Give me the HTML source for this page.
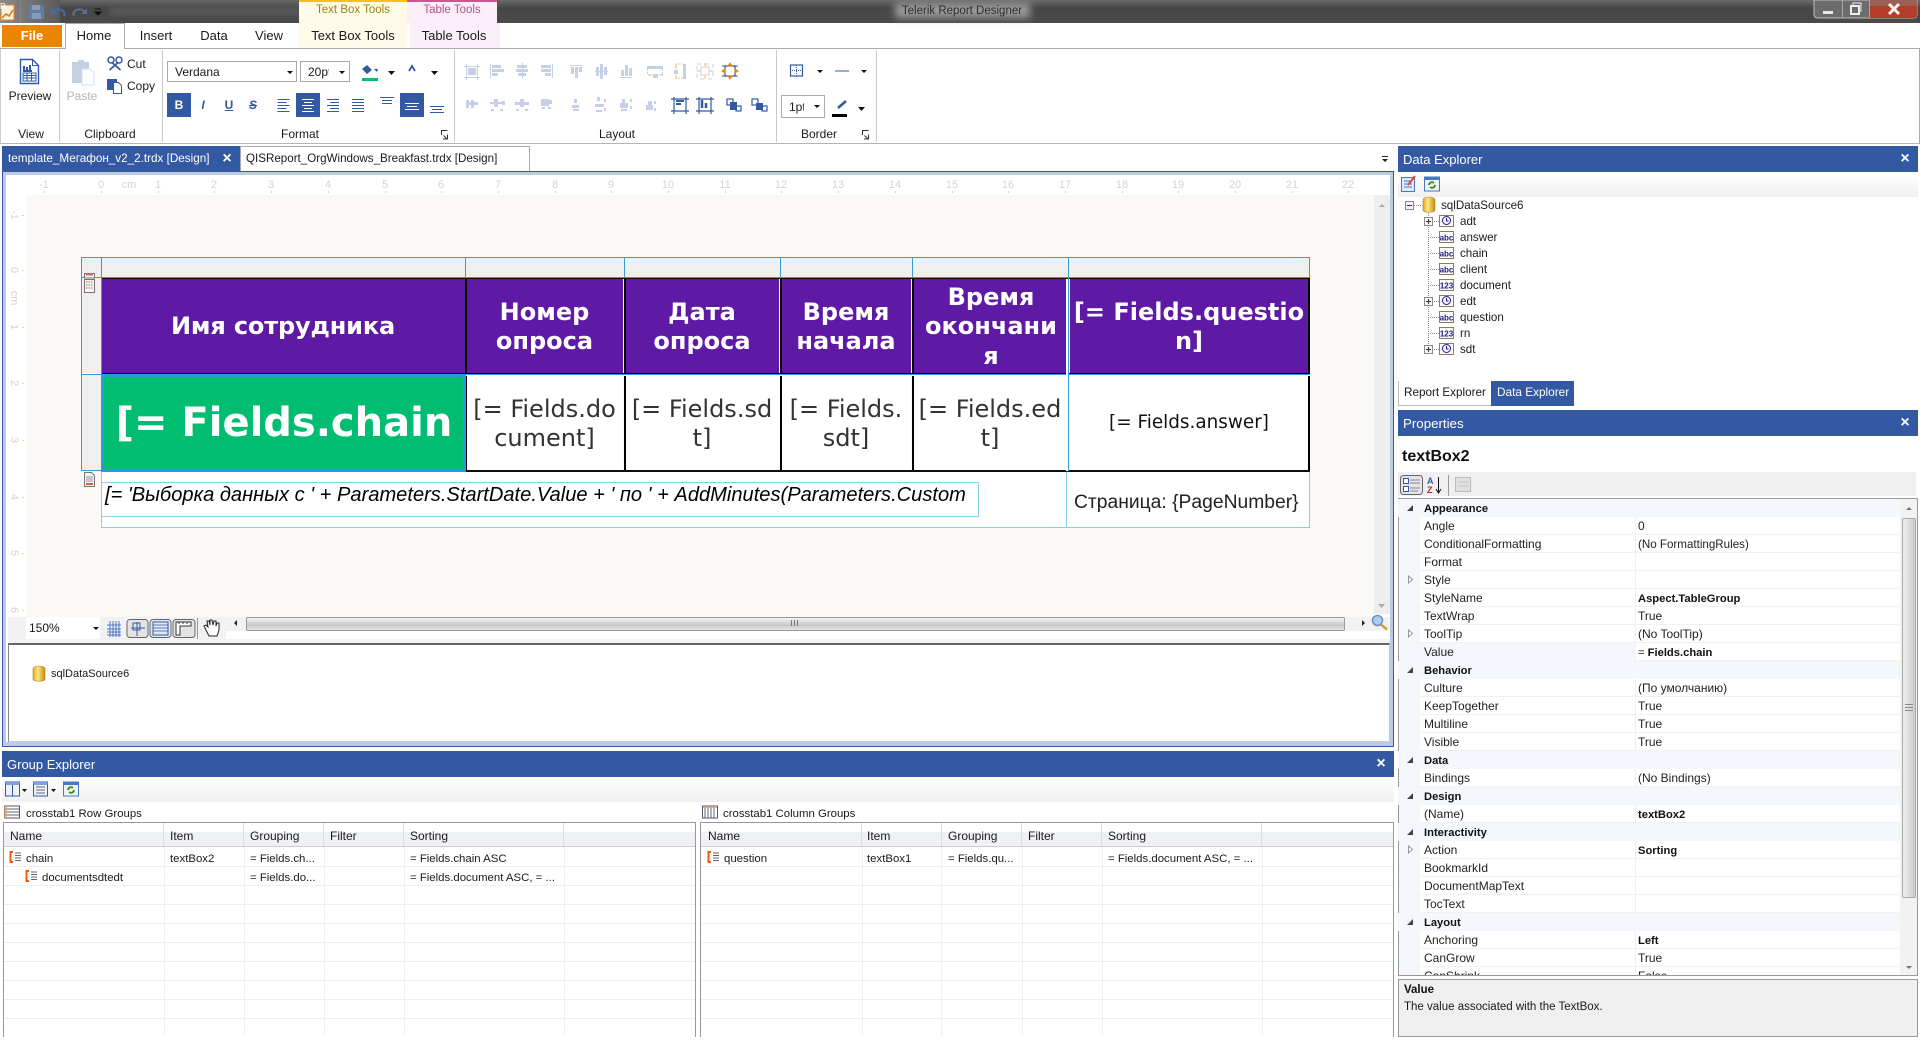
<!DOCTYPE html>
<html lang="ru"><head><meta charset="utf-8"><title>Telerik Report Designer</title>
<style>
html,body{margin:0;padding:0;background:#fff}
body{width:1920px;height:1040px;position:relative;overflow:hidden;font:12px/16px "Liberation Sans","Noto Sans CJK SC",sans-serif;color:#1a1a1a}
.a{position:absolute}
.t{position:absolute;white-space:nowrap;line-height:16px}
.c{transform:translateX(-50%)}
.hdr{position:absolute;background:#3359a3;color:#fff;font-size:13px;line-height:27px;height:26px}
.tb{position:absolute;height:25px;background:linear-gradient(#fff,#f0f0f0)}
.cell{position:absolute;display:flex;align-items:center;justify-content:center;text-align:center;font-family:"DejaVu Sans",sans-serif;box-sizing:border-box;overflow:hidden}
.h{top:279px;height:94px;padding-top:2px;background:#5e1aa5;color:#fff;font-weight:bold;font-size:24px;line-height:29.5px}
.d{top:376px;height:94px;padding-top:2px;background:#fff;color:#333;font-size:24px;line-height:29.5px}
.p{position:absolute;left:1424px;white-space:nowrap;line-height:18px;height:18px;font-size:12px;color:#222}
.v{position:absolute;left:1638px;white-space:nowrap;line-height:18px;height:18px;font-size:12px;color:#222}
.b{font-weight:bold;color:#111;font-size:11.2px;margin-top:1px}
.g{font-size:11.4px;margin-top:1px}
.tr{font-size:11.6px;margin-top:1px}
.cat{position:absolute;left:1398px;width:502px;height:18px;background:#f4f7fc}
</style></head><body>

<!-- title bar -->
<div class="a" style="left:0;top:0;width:1920px;height:23px;background:linear-gradient(#6a6a6a,#464646 35%,#4a4a4a)"></div>
<div class="a" style="left:0;top:0;width:60px;height:23px;background:linear-gradient(90deg,#8a8a8a,#5a5a5a)"></div>
<div class="a" style="left:110px;top:7px;width:190px;height:8px;background:#5c5c5c;filter:blur(3px)"></div>
<div class="a" style="left:895px;top:3px;width:135px;height:15px;background:#9a9a9a;filter:blur(4px)"></div>
<div class="t c" style="left:962px;top:3px;color:#2e2e2e;font-size:11.5px">Telerik Report Designer</div>

<!-- contextual tabs -->
<div class="a" style="left:299px;top:0;width:108px;height:48px;background:#fefbe9;border-top:2px solid #f2c316;box-sizing:border-box"></div>
<div class="a" style="left:407px;top:0;width:90px;height:23px;background:#faeff8;border-top:2px solid #c8588f;box-sizing:border-box"></div>
<div class="a" style="left:410px;top:23px;width:90px;height:25px;background:#faeff8"></div>
<div class="t c" style="left:353px;top:2px;color:#9c7f1e;font-size:11.5px">Text Box Tools</div>
<div class="t c" style="left:452px;top:2px;color:#b8508f;font-size:11.5px">Table Tools</div>

<!-- ribbon tabs -->
<div class="a" style="left:0;top:48px;width:1920px;height:1px;background:#aaa"></div>
<div class="a" style="left:2px;top:25px;width:60px;height:22px;background:#e98500;color:#fff;text-align:center;line-height:21px;font-size:13px;font-weight:bold">File</div>
<div class="a" style="left:65px;top:23px;width:60px;height:26px;background:#fff;border:1px solid #aaa;border-bottom:none;box-sizing:border-box"></div>
<div class="t c" style="left:94px;top:28px;font-size:13px">Home</div>
<div class="t c" style="left:156px;top:28px;font-size:13px">Insert</div>
<div class="t c" style="left:214px;top:28px;font-size:13px">Data</div>
<div class="t c" style="left:269px;top:28px;font-size:13px">View</div>
<div class="t c" style="left:353px;top:28px;font-size:13px">Text Box Tools</div>
<div class="t c" style="left:454px;top:28px;font-size:13px">Table Tools</div>

<!-- ribbon body -->
<div class="a" style="left:0;top:49px;width:1920px;height:95px;border-bottom:1px solid #b5b5b5;border-left:1px solid #ccc;border-right:1px solid #aaa;box-sizing:border-box;background:#fff"></div>
<div class="a" style="left:59px;top:50px;width:1px;height:92px;background:#c8c8c8"></div>
<div class="a" style="left:162px;top:50px;width:1px;height:92px;background:#c8c8c8"></div>
<div class="a" style="left:454px;top:50px;width:1px;height:92px;background:#c8c8c8"></div>
<div class="a" style="left:776px;top:50px;width:1px;height:92px;background:#c8c8c8"></div>
<div class="a" style="left:876px;top:50px;width:1px;height:92px;background:#c8c8c8"></div>
<div class="t c" style="left:31px;top:126px">View</div>
<div class="t c" style="left:110px;top:126px">Clipboard</div>
<div class="t c" style="left:300px;top:126px">Format</div>
<div class="t c" style="left:617px;top:126px">Layout</div>
<div class="t c" style="left:819px;top:126px">Border</div>
<div class="t c" style="left:30px;top:88px">Preview</div>
<div class="t c" style="left:82px;top:88px;color:#b4b4b4">Paste</div>
<div class="t" style="left:127px;top:56px">Cut</div>
<div class="t" style="left:127px;top:78px">Copy</div>
<div class="a" style="left:167px;top:61px;width:130px;height:21px;border:1px solid #aaa;box-sizing:border-box"></div>
<div class="t" style="left:175px;top:64px">Verdana</div>
<div class="a" style="left:300px;top:61px;width:50px;height:21px;border:1px solid #aaa;box-sizing:border-box"></div>
<div class="t" style="left:308px;top:64px;width:21px;overflow:hidden">20pt</div>
<div class="a" style="left:167px;top:93px;width:24px;height:24px;background:#3359a3"></div>
<div class="a" style="left:296px;top:93px;width:24px;height:24px;background:#3359a3"></div>
<div class="a" style="left:400px;top:93px;width:24px;height:24px;background:#3359a3"></div>
<div class="a" style="left:781px;top:95px;width:44px;height:23px;border:1px solid #aaa;box-sizing:border-box"></div>
<div class="t" style="left:789px;top:99px;width:15px;overflow:hidden">1pt</div>
<div class="t c" style="left:179px;top:97px;color:#fff;font-weight:bold">B</div>
<div class="t c" style="left:203px;top:97px;color:#3359a3;font-style:italic;font-weight:bold">I</div>
<div class="t c" style="left:229px;top:97px;color:#3359a3;font-weight:bold;text-decoration:underline">U</div>
<div class="t c" style="left:253px;top:97px;color:#3359a3;font-weight:bold;text-decoration:line-through;font-style:italic">S</div>

<!-- document tabs -->
<div class="a" style="left:2px;top:146px;width:238px;height:25px;background:#3359a3"></div>
<div class="t" style="left:8px;top:151px;color:#fff;font-size:11.7px">template_Мегафон_v2_2.trdx [Design]</div>
<div class="t c" style="left:227px;top:151px;color:#fff;font-size:16px;font-weight:bold">×</div>
<div class="a" style="left:240px;top:146px;width:290px;height:25px;border:1px solid #aaa;border-bottom:none;box-sizing:border-box;background:#fff"></div>
<div class="t" style="left:246px;top:151px;font-size:11.6px">QISReport_OrgWindows_Breakfast.trdx [Design]</div>

<!-- designer frame -->
<div class="a" style="left:2px;top:171px;width:1392px;height:576px;border:1px solid #3359a3;background:#bccbe3;box-sizing:border-box"></div>
<div class="a" style="left:6px;top:175px;width:1384px;height:567px;background:#fff"></div>
<div class="a" style="left:26px;top:195px;width:1348px;height:422px;background:#faf9f5"></div>
<div class="a" style="left:1374px;top:195px;width:16px;height:419px;background:#eeeeee"></div>
<div class="a" style="left:8px;top:617px;width:1382px;height:26px;background:#f2f2f2"></div>
<div class="a" style="left:26px;top:617px;width:74px;height:22px;background:#fff"></div>
<div class="a" style="left:226px;top:631px;width:1164px;height:8px;background:#fff"></div>
<div class="a" style="left:226px;top:617px;width:1146px;height:14px;background:#f2f2f2"></div>
<div class="a" style="left:246px;top:617px;width:1099px;height:14px;box-sizing:border-box;border:1px solid #999;border-radius:2px;background:linear-gradient(#f4f4f4,#c8c8c8 60%,#e6e6e6)"></div>
<div class="t" style="left:29px;top:620px;font-size:12px">150%</div>
<div class="a" style="left:8px;top:643px;width:1382px;height:99px;background:#fff;border-top:2px solid #666;border-left:1px solid #888;border-right:1px solid #ccc;border-bottom:1px solid #ccc;box-sizing:border-box"></div>
<div class="t" style="left:51px;top:666px;font-size:11px">sqlDataSource6</div>

<!-- report table -->
<div class="a" style="left:81px;top:257px;width:1228px;height:21px;background:#efefef"></div>
<div class="a" style="left:81px;top:257px;width:20px;height:213px;background:#efefef"></div>
<div class="a" style="left:101px;top:470px;width:1208px;height:57px;background:#fff"></div>
<div class="cell h" style="left:101px;width:364px;letter-spacing:-.15px">Имя сотрудника</div>
<div class="cell h" style="left:466px;width:157px">Номер<br>опроса</div>
<div class="cell h" style="left:625px;width:154px">Дата<br>опроса</div>
<div class="cell h" style="left:781px;width:130px">Время<br>начала</div>
<div class="cell h" style="left:914px;width:154px">Время<br>окончани<br>я</div>
<div class="cell h" style="left:1070px;width:238px">[= Fields.questio<br>n]</div>
<div class="cell" style="left:103px;top:376px;width:360px;height:94px;background:#00bd71;color:#fff;font-weight:bold;font-size:40px;padding-left:2px">[= Fields.chain</div>
<div class="cell d" style="left:466px;width:157px">[= Fields.do<br>cument]</div>
<div class="cell d" style="left:625px;width:154px">[= Fields.sd<br>t]</div>
<div class="cell d" style="left:781px;width:130px">[= Fields.<br>sdt]</div>
<div class="cell d" style="left:913px;width:154px">[= Fields.ed<br>t]</div>
<div class="cell d" style="left:1070px;width:238px;font-size:18.4px;padding-top:0;color:#111">[= Fields.answer]</div>
<!-- lines -->
<div class="a" style="left:101px;top:278px;width:1208px;height:1px;background:#0c0c0c"></div>
<div class="a" style="left:465px;top:279px;width:2px;height:192px;background:#000"></div>
<div class="a" style="left:624px;top:279px;width:2px;height:192px;background:#000"></div>
<div class="a" style="left:780px;top:279px;width:2px;height:192px;background:#000"></div>
<div class="a" style="left:912px;top:279px;width:2px;height:192px;background:#000"></div>
<div class="a" style="left:1308px;top:278px;width:2px;height:193px;background:#000"></div>
<div class="a" style="left:465px;top:470px;width:845px;height:2px;background:#0c0c0c"></div>
<div class="a" style="left:81px;top:373px;width:1229px;height:3px;background:#fff"></div>
<div class="a" style="left:81px;top:374px;width:20px;height:2px;background:#efefef"></div>
<div class="a" style="left:101px;top:373px;width:1209px;height:1px;background:#000"></div>
<div class="a" style="left:81px;top:374px;width:1229px;height:1px;background:#3a9ad6"></div>
<div class="a" style="left:1068px;top:257px;width:1px;height:214px;background:#3a9ad6"></div>
<div class="a" style="left:1066px;top:279px;width:2px;height:192px;background:#fff"></div>
<div class="a" style="left:1068px;top:279px;width:1px;height:192px;background:#3a9ad6"></div>
<div class="a" style="left:81px;top:257px;width:1229px;height:1px;background:#3a9ad6"></div>
<div class="a" style="left:81px;top:277px;width:1229px;height:1px;background:#3a9ad6"></div>
<div class="a" style="left:81px;top:257px;width:1px;height:214px;background:#3a9ad6"></div>
<div class="a" style="left:101px;top:257px;width:1px;height:214px;background:#3a9ad6"></div>
<div class="a" style="left:465px;top:257px;width:1px;height:21px;background:#3a9ad6"></div>
<div class="a" style="left:624px;top:257px;width:1px;height:21px;background:#3a9ad6"></div>
<div class="a" style="left:780px;top:257px;width:1px;height:21px;background:#3a9ad6"></div>
<div class="a" style="left:912px;top:257px;width:1px;height:21px;background:#3a9ad6"></div>
<div class="a" style="left:1309px;top:257px;width:1px;height:21px;background:#3a9ad6"></div>
<div class="a" style="left:81px;top:470px;width:20px;height:1px;background:#3a9ad6"></div>
<div class="a" style="left:101px;top:374px;width:365px;height:98px;border:3px solid #2b9bd8;box-sizing:border-box"></div>
<!-- footer -->
<div class="a" style="left:101px;top:472px;width:1209px;height:56px;border:1px solid #86cdee;border-top:none;box-sizing:border-box"></div>
<div class="a" style="left:1066px;top:472px;width:1px;height:55px;background:#86cdee"></div>
<div class="a" style="left:101px;top:482px;width:878px;height:35px;border:1px solid #86cdee;box-sizing:border-box"></div>
<div class="t" style="left:105px;top:485px;font-size:20.1px;line-height:20px;font-style:italic;color:#000">[= 'Выборка данных с ' + Parameters.StartDate.Value + ' по ' + AddMinutes(Parameters.Custom</div>
<div class="t" style="left:1074px;top:492px;font-size:19.3px;line-height:22px;color:#222">Страница: {PageNumber}</div>

<!-- Data Explorer -->
<div class="hdr" style="left:1398px;top:146px;width:520px;padding-left:5px;box-sizing:border-box">Data Explorer</div>
<div class="t c" style="left:1905px;top:151px;color:#fff;font-weight:bold;font-size:16px">×</div>
<div class="tb" style="left:1398px;top:172px;width:520px"></div>
<div class="t tr" style="left:1441px;top:197px">sqlDataSource6</div>
<div class="t tr" style="left:1460px;top:213px">adt</div>
<div class="t tr" style="left:1460px;top:229px">answer</div>
<div class="t tr" style="left:1460px;top:245px">chain</div>
<div class="t tr" style="left:1460px;top:261px">client</div>
<div class="t tr" style="left:1460px;top:277px">document</div>
<div class="t tr" style="left:1460px;top:293px">edt</div>
<div class="t tr" style="left:1460px;top:309px">question</div>
<div class="t tr" style="left:1460px;top:325px">rn</div>
<div class="t tr" style="left:1460px;top:341px">sdt</div>
<div class="a" style="left:1398px;top:381px;width:94px;height:25px;border:1px solid #bbb;border-top:none;border-right:none;box-sizing:border-box;background:#fff"></div>
<div class="t" style="left:1404px;top:385px;font-size:11.7px">Report Explorer</div>
<div class="a" style="left:1491px;top:381px;width:83px;height:25px;background:#3359a3"></div>
<div class="t" style="left:1497px;top:384px;color:#fff;font-size:11.8px">Data Explorer</div>

<!-- Properties -->
<div class="hdr" style="left:1398px;top:410px;width:520px;padding-left:5px;box-sizing:border-box;font-size:13.3px">Properties</div>
<div class="t c" style="left:1905px;top:415px;color:#fff;font-weight:bold;font-size:16px">×</div>
<div class="t" style="left:1402px;top:448px;font-size:16px;line-height:18px;font-weight:bold;color:#111">textBox2</div>
<div class="a" style="left:1398px;top:472px;width:518px;height:24px;background:#efefef"></div>
<div class="a" style="left:1398px;top:498px;width:520px;height:478px;border:1px solid #999;box-sizing:border-box;background:#fff;overflow:hidden"></div>
<div class="a" style="left:1399px;top:499px;width:21px;height:476px;background:#f4f7fc"></div>
<div class="a" style="left:1635px;top:499px;width:1px;height:476px;background:#f0f0f0"></div>
<div class="a" style="left:1420px;top:499px;width:480px;height:476px;background:repeating-linear-gradient(transparent 0,transparent 17px,#f1f1f1 17px,#f1f1f1 18px)"></div>
<div class="cat" style="top:499px"></div><div class="cat" style="top:661px"></div><div class="cat" style="top:751px"></div><div class="cat" style="top:787px"></div><div class="cat" style="top:823px"></div><div class="cat" style="top:913px"></div>
<div class="a" style="left:1420px;top:643px;width:215px;height:18px;background:#f4f7fc"></div>
<div class="p b" style="top:499px">Appearance</div>
<div class="p" style="top:517px">Angle</div><div class="v" style="top:517px">0</div>
<div class="p" style="top:535px">ConditionalFormatting</div><div class="v" style="top:536px;font-size:11.6px">(No FormattingRules)</div>
<div class="p" style="top:553px">Format</div>
<div class="p" style="top:571px">Style</div>
<div class="p" style="top:589px">StyleName</div><div class="v b" style="top:589px">Aspect.TableGroup</div>
<div class="p" style="top:607px">TextWrap</div><div class="v" style="top:607px">True</div>
<div class="p" style="top:625px">ToolTip</div><div class="v" style="top:625px">(No ToolTip)</div>
<div class="p" style="top:643px">Value</div><div class="v b" style="top:643px"><span style="font-weight:normal">=</span> Fields.chain</div>
<div class="p b" style="top:661px">Behavior</div>
<div class="p" style="top:679px">Culture</div><div class="v" style="top:679px">(По умолчанию)</div>
<div class="p" style="top:697px">KeepTogether</div><div class="v" style="top:697px">True</div>
<div class="p" style="top:715px">Multiline</div><div class="v" style="top:715px">True</div>
<div class="p" style="top:733px">Visible</div><div class="v" style="top:733px">True</div>
<div class="p b" style="top:751px">Data</div>
<div class="p" style="top:769px">Bindings</div><div class="v" style="top:769px">(No Bindings)</div>
<div class="p b" style="top:787px">Design</div>
<div class="p" style="top:805px">(Name)</div><div class="v b" style="top:805px">textBox2</div>
<div class="p b" style="top:823px">Interactivity</div>
<div class="p" style="top:841px">Action</div><div class="v b" style="top:841px">Sorting</div>
<div class="p" style="top:859px">BookmarkId</div>
<div class="p" style="top:877px">DocumentMapText</div>
<div class="p" style="top:895px">TocText</div>
<div class="p b" style="top:913px">Layout</div>
<div class="p" style="top:931px">Anchoring</div><div class="v b" style="top:931px">Left</div>
<div class="p" style="top:949px">CanGrow</div><div class="v" style="top:949px">True</div>
<div class="p" style="top:967px;height:8px;overflow:hidden">CanShrink</div><div class="v" style="top:967px;height:8px;overflow:hidden">False</div>
<div class="a" style="left:1900px;top:499px;width:17px;height:476px;background:#f2f2f2"></div>
<div class="a" style="left:1902px;top:518px;width:14px;height:380px;background:linear-gradient(90deg,#eee,#ccc);border:1px solid #aaa;box-sizing:border-box;border-radius:2px"></div>
<div class="a" style="left:1398px;top:979px;width:520px;height:58px;background:#efefef;border:1px solid #999;box-sizing:border-box"></div>
<div class="t" style="left:1404px;top:982px;font-size:11.5px;font-weight:bold;color:#111">Value</div>
<div class="t" style="left:1404px;top:999px;font-size:11.5px">The value associated with the TextBox.</div>

<!-- Group Explorer -->
<div class="hdr" style="left:2px;top:751px;width:1392px;padding-left:5px;box-sizing:border-box">Group Explorer</div>
<div class="t c" style="left:1381px;top:756px;color:#fff;font-weight:bold;font-size:16px">×</div>
<div class="tb" style="left:2px;top:777px;width:1392px"></div>
<div class="t g" style="left:26px;top:805px">crosstab1 Row Groups</div>
<div class="t g" style="left:723px;top:805px">crosstab1 Column Groups</div>
<div class="a" style="left:3px;top:822px;width:693px;height:215px;border:1px solid #999;border-bottom:none;box-sizing:border-box"></div>
<div class="a" style="left:700px;top:822px;width:694px;height:215px;border:1px solid #999;border-bottom:none;box-sizing:border-box"></div>
<div class="a" style="left:4px;top:823px;width:691px;height:24px;background:linear-gradient(#fff 40%,#eff1f5 40%);border-bottom:1px solid #ccc;box-sizing:border-box"></div>
<div class="a" style="left:701px;top:823px;width:692px;height:24px;background:linear-gradient(#fff 40%,#eff1f5 40%);border-bottom:1px solid #ccc;box-sizing:border-box"></div>
<div class="t" style="left:10px;top:828px">Name</div><div class="t" style="left:170px;top:828px">Item</div><div class="t" style="left:250px;top:828px">Grouping</div><div class="t" style="left:330px;top:828px">Filter</div><div class="t" style="left:410px;top:828px">Sorting</div>
<div class="t" style="left:708px;top:828px">Name</div><div class="t" style="left:867px;top:828px">Item</div><div class="t" style="left:948px;top:828px">Grouping</div><div class="t" style="left:1028px;top:828px">Filter</div><div class="t" style="left:1108px;top:828px">Sorting</div>
<div class="t g" style="left:26px;top:850px">chain</div><div class="t g" style="left:170px;top:850px">textBox2</div><div class="t g" style="left:250px;top:850px">= Fields.ch...</div><div class="t g" style="left:410px;top:850px">= Fields.chain ASC</div>
<div class="t g" style="left:42px;top:869px">documentsdtedt</div><div class="t g" style="left:250px;top:869px">= Fields.do...</div><div class="t g" style="left:410px;top:869px">= Fields.document ASC, = ...</div>
<div class="t g" style="left:724px;top:850px">question</div><div class="t g" style="left:867px;top:850px">textBox1</div><div class="t g" style="left:948px;top:850px">= Fields.qu...</div><div class="t g" style="left:1108px;top:850px">= Fields.document ASC, = ...</div>

<!-- icons and rulers -->
<svg class="a" style="left:0;top:0" width="1920" height="1040" viewBox="0 0 1920 1040" font-family="Liberation Sans, sans-serif">
<!-- ruler -->
<g fill="#d8d4c8" font-size="11" text-anchor="middle">
<text x="44" y="188">-1</text><text x="101" y="188">0</text><text x="129" y="188">cm</text><text x="158" y="188">1</text><text x="214" y="188">2</text><text x="271" y="188">3</text><text x="328" y="188">4</text><text x="385" y="188">5</text><text x="441" y="188">6</text><text x="498" y="188">7</text><text x="555" y="188">8</text><text x="611" y="188">9</text><text x="668" y="188">10</text><text x="725" y="188">11</text><text x="781" y="188">12</text><text x="838" y="188">13</text><text x="895" y="188">14</text><text x="952" y="188">15</text><text x="1008" y="188">16</text><text x="1065" y="188">17</text><text x="1122" y="188">18</text><text x="1178" y="188">19</text><text x="1235" y="188">20</text><text x="1292" y="188">21</text><text x="1348" y="188">22</text>
<text transform="translate(11,215) rotate(90)">-1</text><text transform="translate(11,270) rotate(90)">0</text><text transform="translate(11,298) rotate(90)">cm</text><text transform="translate(11,327) rotate(90)">1</text><text transform="translate(11,383) rotate(90)">2</text><text transform="translate(11,440) rotate(90)">3</text><text transform="translate(11,497) rotate(90)">4</text><text transform="translate(11,553) rotate(90)">5</text><text transform="translate(11,610) rotate(90)">6</text>
</g>
<g stroke="#d8d4c8"><path d="M44.500 191v2M101.500 191v2M158.500 191v2M214.500 191v2M271.500 191v2M328.500 191v2M385.500 191v2M441.500 191v2M498.500 191v2M555.500 191v2M611.500 191v2M668.500 191v2M725.500 191v2M781.500 191v2M838.500 191v2M895.500 191v2M952.500 191v2M1008.500 191v2M1065.500 191v2M1122.500 191v2M1178.500 191v2M1235.500 191v2M1292.500 191v2M1348.500 191v2M22 215.500h2M22 270.500h2M22 327.500h2M22 383.500h2M22 440.500h2M22 497.500h2M22 553.500h2M22 610.500h2"/></g>

<!-- quick access -->
<rect x="1" y="5" width="13" height="15" fill="#f4f0e4" stroke="#e08a20"/><path d="M2 18l4-4 3 2 4-6" fill="none" stroke="#d07a10" stroke-width="1.500"/><text x="0" y="9" font-size="8" fill="#fff">R</text>
<rect x="20" y="2" width="1" height="20" fill="#888"/>
<path d="M29 5h13l2 2v12H29z" fill="#5f7fa8"/><rect x="32" y="5" width="8" height="5" fill="#8a9cb4"/><rect x="32" y="13" width="9" height="6" fill="#8a9cb4"/>
<path d="M53 12a6 4.500 0 0 1 11 4" fill="none" stroke="#456cb0" stroke-width="2"/><path d="M51 8v6h6z" fill="#456cb0"/>
<path d="M85 12a6 4.500 0 0 0-11 4" fill="none" stroke="#5b6f8c" stroke-width="2"/><path d="M87 8v6h-6z" fill="#5b6f8c"/>
<path d="M95 9h6M95 12h6l-3 3z" fill="#111" stroke="#111"/>

<!-- window buttons -->
<path d="M1814 0h103v14q0 4-4 4h-95q-4 0-4-4z" fill="#6c6c6c" stroke="#bdbdbd"/>
<path d="M1870 0h47v14q0 4-4 4h-43z" fill="#b33d28"/><path d="M1870 0h47v6h-47z" fill="#8c7a74" opacity=".6"/>
<path d="M1842.500 0v18M1869.500 0v18" stroke="#a8a8a8"/>
<rect x="1823" y="11" width="10" height="3" fill="#e8e8e8"/>
<rect x="1851" y="6" width="8" height="8" fill="none" stroke="#eee" stroke-width="2"/><path d="M1853 5V3h8v8h-1" fill="none" stroke="#eee"/>
<path d="M1889 4l10 10M1899 4l-10 10" stroke="#f4f4f4" stroke-width="3"/>

<!-- Preview -->
<path d="M20.500 59.500h12l6 6v18h-18z" fill="#fff" stroke="#3359a3" stroke-width="1.400"/><path d="M32.500 59.500v6h6" fill="none" stroke="#3359a3"/>
<path d="M24 66v4M27 67v3M30 65v5M23 71h9" stroke="#3359a3" stroke-width="2" fill="none"/><path d="M23 73h13v8H23zM23 75.500h13M23 78h13M27 73v8M31.500 73v8" fill="none" stroke="#3359a3"/>
<!-- Paste -->
<path d="M72 62h6v-2h6v2h5v21H72z" fill="#c5d0e6"/><path d="M82 69h8l4 4v12H82z" fill="#fff" stroke="#d4dcec"/>
<!-- Cut -->
<circle cx="111" cy="60" r="3" fill="none" stroke="#3359a3" stroke-width="1.500"/><circle cx="119" cy="60" r="3" fill="none" stroke="#3359a3" stroke-width="1.500"/><path d="M112.500 63l8 7M117.500 63l-8 7" stroke="#3359a3" stroke-width="1.800"/>
<!-- Copy -->
<rect x="107" y="79" width="10" height="11" fill="#3359a3"/><path d="M113.500 82.500h5l3 3v8h-8z" fill="#fff" stroke="#3359a3"/>
<!-- combo carets -->
<path d="M287 71h6l-3 3zM339 71h6l-3 3zM388 71h7l-3.500 4zM431 71h7l-3.500 4zM817 70h6l-3 3zM861 70h6l-3 3zM814 105h6l-3 3zM858 107h7l-3.500 4z" fill="#111"/>
<!-- fill/font colour -->
<path d="M362 69l5-4 5 5-5 4zM374 69h4l-1 3z" fill="#3359a3"/><rect x="362" y="78" width="16" height="3" fill="#00bd71"/>
<path d="M409 71l3-5 3 5" fill="none" stroke="#3359a3" stroke-width="1.800"/>
<!-- align -->
<g stroke="#3359a3" fill="none"><path d="M277.500 99.500h12M277.500 102.500h9M277.500 105.500h12M277.500 108.500h9M277.500 111.500h12M327 99.500h12M330 102.500h9M327 105.500h12M330 108.500h9M327 111.500h12M352 99.500h12M352 102.500h12M352 105.500h12M352 108.500h12M352 111.500h12M380 97.500h14M382 100.500h10M382 103.500h10M430 106.500h14M432 109.500h10M430 112.500h14"/></g>
<g stroke="#fff" fill="none"><path d="M302 99.500h12M304 102.500h8M302 105.500h12M304 108.500h8M302 111.500h12M405 103.500h14M407 106.500h10M405 109.500h14"/></g>
<!-- launcher -->
<path d="M441.500 135v-4.500h6M447 139l-3.500-3.500M443 139h4.500v-4.500M862.500 135v-4.500h6M868 139l-3.500-3.500M864 139h4.500v-4.500" fill="none" stroke="#333"/>
<!-- layout row 1 -->
<g fill="#c5d0e6" stroke="none">
<rect x="468" y="68" width="8" height="7"/><path d="M466.500 64v16M477.500 64v16M464 66.500h16M464 77.500h16" stroke="#c5d0e6" fill="none"/>
<rect x="490" y="64" width="1" height="14"/><rect x="492" y="65" width="9" height="3"/><rect x="492" y="69" width="12" height="3"/><rect x="492" y="73" width="6" height="3"/>
<rect x="522" y="63" width="1" height="16"/><rect x="517" y="65" width="10" height="3"/><rect x="516" y="69" width="12" height="3"/><rect x="518" y="73" width="8" height="3"/>
<rect x="552" y="64" width="1" height="14"/><rect x="541" y="65" width="10" height="3"/><rect x="541" y="69" width="10" height="3"/><rect x="545" y="73" width="6" height="3"/>
<rect x="570" y="65" width="12" height="1"/><rect x="571" y="67" width="3" height="7"/><rect x="575" y="67" width="3" height="11"/><rect x="579" y="67" width="3" height="5"/>
<rect x="595" y="71" width="13" height="1"/><rect x="596" y="67" width="3" height="9"/><rect x="600" y="64" width="3" height="15"/><rect x="604" y="67" width="3" height="8"/>
<rect x="620" y="77" width="12" height="1"/><rect x="621" y="70" width="3" height="6"/><rect x="625" y="65" width="3" height="11"/><rect x="629" y="68" width="3" height="8"/>
<rect x="647" y="66" width="16" height="3"/><rect x="653" y="74" width="5" height="4"/><path d="M647.500 69v6M662.500 69v6" stroke="#c5d0e6" stroke-dasharray="2 1"/>
<path d="M648 75h4M659 75h4" stroke="#fbd9ae" stroke-width="2"/>
<rect x="674" y="70" width="4" height="4"/><rect x="683" y="64" width="3" height="15"/><path d="M675 64h8M675 78h8" stroke="#c5d0e6" stroke-dasharray="2 1"/><path d="M676 64v5M676 75v4" stroke="#fbd9ae" stroke-width="2"/>
<path d="M697 64h16v15h-16z" fill="none" stroke="#c5d0e6" stroke-dasharray="4 4"/><rect x="701" y="67" width="8" height="8" fill="#fff" stroke="#c5d0e6"/><path d="M697 71h4M709 71h4M705 63v4M705 75v4" stroke="#fbd9ae" stroke-width="2"/>
</g>
<rect x="725" y="66" width="10" height="10" fill="none" stroke="#3359a3" stroke-width="1.300"/><path d="M722 66h16M722 76h16" stroke="#3359a3"/><path d="M722 71l3-2v4zM738 71l-3-2v4zM730 63l-2 3h4zM730 79l-2-3h4z" fill="#e98500" stroke="#e98500"/>
<!-- layout row 2 -->
<g fill="#c5d0e6" stroke="none">
<rect x="466" y="102" width="12" height="3"/><rect x="466" y="100" width="3" height="8"/><rect x="471" y="100" width="3" height="8"/>
<rect x="490" y="102" width="15" height="2"/><rect x="494" y="99" width="4" height="8"/><rect x="502" y="101" width="3" height="4"/><path d="M491 110h3M500 110h3" stroke="#c5d0e6" stroke-width="2"/>
<rect x="515" y="102" width="14" height="3"/><rect x="520" y="99" width="4" height="8"/><path d="M516 110h3M525 110h3" stroke="#c5d0e6" stroke-width="2"/>
<rect x="541" y="99" width="8" height="7"/><rect x="547" y="100" width="5" height="4"/><path d="M542 108h3M548 108h3" stroke="#c5d0e6" stroke-width="2"/>
<rect x="574" y="99" width="3" height="4"/><rect x="572" y="105" width="7" height="3"/><rect x="573" y="109" width="6" height="2"/>
<rect x="597" y="97" width="3" height="4"/><rect x="595" y="104" width="9" height="3"/><rect x="596" y="110" width="6" height="2"/><path d="M605 99v3M605 108v3" stroke="#c5d0e6" stroke-width="2"/>
<rect x="622" y="99" width="3" height="4"/><rect x="620" y="103" width="8" height="5"/><rect x="621" y="109" width="6" height="2"/><path d="M631 99v3M631 106v3" stroke="#c5d0e6" stroke-width="2"/>
<rect x="648" y="101" width="4" height="4"/><rect x="646" y="105" width="7" height="5"/><path d="M655 101v3M655 108v3" stroke="#c5d0e6" stroke-width="2"/>
</g>
<g fill="none" stroke="#3359a3" stroke-width="1.200">
<path d="M671 99h18M671 111h18M674 97v17M686 97v17"/><path d="M676 101h8M676 104h5" stroke-width="2"/>
<path d="M696 99h18M696 111h18M699 97v17M711 97v17"/><path d="M702 100v8M706 103v5" stroke-width="2.500"/>
<rect x="727" y="99" width="6" height="6"/><rect x="736" y="106" width="5" height="5"/>
<rect x="752" y="99" width="6" height="6"/><rect x="762" y="106" width="5" height="5"/>
</g>
<rect x="730" y="102" width="7" height="8" fill="#3359a3"/><rect x="756" y="103" width="7" height="7" fill="#3359a3"/>
<!-- border -->
<g fill="none"><rect x="790.500" y="65" width="12" height="11" stroke="#3359a3" stroke-width="1.200"/><path d="M796.500 65v11M790 70.500h13" stroke="#3359a3" stroke-dasharray="1 1"/><path d="M835 71h14" stroke="#3359a3"/><path d="M838 108l8-7" stroke="#3359a3" stroke-width="2.500"/></g>
<rect x="832" y="114" width="15" height="3" fill="#000"/>
<!-- doc dropdown -->
<path d="M1382 156h6v1h-6zM1382 159h6l-3 3z" fill="#222"/>
<!-- Vertical scroll arrows -->
<path d="M1379 207l3-3 3 3zM1378 604h7l-3.500 4z" fill="#aaa"/>
<!-- designer tool strip -->
<path d="M93 627h6l-3 3z" fill="#111"/>
<path d="M107 629h14M107 632h14M107 635h14M110 621v16M113 621v16M116 621v16M119 621v16M107 625h14" stroke="#4a78c0" fill="none"/>
<g fill="#e4e4e4" stroke="#666"><rect x="127" y="619.500" width="21" height="18" rx="3"/><rect x="150" y="619.500" width="21" height="18" rx="3" fill="#dde6f4"/><rect x="173" y="619.500" width="22" height="18" rx="3"/></g>
<path d="M131 628h14M137 622v14" stroke="#3359a3"/><rect x="133" y="623" width="7" height="7" fill="none" stroke="#3359a3"/>
<rect x="153" y="622" width="15" height="13" fill="#dfe9f7" stroke="#3359a3"/><path d="M153 625h15M153 628h15M153 631h15" stroke="#3359a3" stroke-width=".7"/>
<path d="M176 622h15v4h-11v9h-4zM179 622v2M183 622v2M187 622v2" fill="#fff" stroke="#333"/>
<rect x="197" y="618" width="1" height="21" fill="#999"/>
<path d="M206 630l-2-4 2-1 2 2-1-6h2l1 4 0-5h2l1 5 1-4h2l0 5 1-3h2v7l-2 6h-8z" fill="#fff" stroke="#222"/>
<path d="M237 620v6l-3-3z" fill="#222"/><path d="M1362 620v6l3-3z" fill="#222"/>
<path d="M791.500 620v6M794.500 620v6M797.500 620v6" stroke="#777"/>
<circle cx="1377.500" cy="620.500" r="5" fill="#a8cff0" stroke="#6a93bc" stroke-width="1.500"/><path d="M1381 624.500l6 5" stroke="#c9a030" stroke-width="2.400"/>
<!-- tray cylinder -->
<defs><linearGradient id="g" x1="0" x2="1"><stop offset="0" stop-color="#e8a90c"/><stop offset=".4" stop-color="#fde88a"/><stop offset="1" stop-color="#c98a06"/></linearGradient></defs>
<path d="M33 669c0-4 12-4 12 0v10c0 3-12 3-12 0z" fill="url(#g)" stroke="#b08420" stroke-width=".6"/>
<path d="M1423 200c0-4 12-4 12 0v10c0 3-12 3-12 0z" fill="url(#g)" stroke="#b08420" stroke-width=".6"/>
<!-- small table icons -->
<path d="M84.500 273.500h10v4.500h-10zM84.500 279.500h10v13h-10z" fill="#f4f4f4" stroke="#777"/><path d="M86 274.500h7" stroke="#d66" stroke-width="2"/><path d="M86 282h7M86 285h7M86 288h7" stroke="#c64" stroke-dasharray="1.500 1"/>
<path d="M84.500 472.500h7l3 3v11h-10z" fill="#f4f4f4" stroke="#777"/><path d="M86 484h7" stroke="#c64" stroke-width="2"/><path d="M86 477h7M86 479h7M86 481h7" stroke="#99a"/>
<!-- data explorer toolbar -->
<rect x="1401.500" y="177.500" width="13" height="14" fill="#dfe9f7" stroke="#4a78c0"/><path d="M1404 181h8M1404 184h8M1404 187h8" stroke="#4a78c0"/><path d="M1408 185l7-9" stroke="#e0452a" stroke-width="2"/>
<rect x="1424.500" y="177" width="15" height="14" fill="#eef3fb" stroke="#4a78c0"/><rect x="1424.500" y="177" width="15" height="3" fill="#4a78c0"/><path d="M1429 185a3 3 0 0 1 5-2M1435 185a3 3 0 0 1-5 2" fill="none" stroke="#3a8a10" stroke-width="1.800"/>
<!-- tree -->
<g fill="none" stroke="#888" stroke-dasharray="1 1"><path d="M1414 205.500h7M1428.500 213v136M1428 237.500h11M1428 253.500h11M1428 269.500h11M1428 285.500h11M1428 317.500h11M1428 333.500h11M1432 221.500h7M1432 301.500h7M1432 349.500h7"/></g>
<g fill="#f4f4f4" stroke="#8a8a8a"><rect x="1405.500" y="201.500" width="8" height="8"/><rect x="1424.500" y="217.500" width="8" height="8"/><rect x="1424.500" y="297.500" width="8" height="8"/><rect x="1424.500" y="345.500" width="8" height="8"/></g>
<path d="M1407 205.500h5M1426 221.500h5M1428.500 219v5M1426 301.500h5M1428.500 299v5M1426 349.500h5M1428.500 347v5" stroke="#334"/>
<g fill="#fbfaf5" stroke="#8b7d5c"><rect x="1439.500" y="215.500" width="14" height="11"/><rect x="1439.500" y="231.500" width="14" height="11"/><rect x="1439.500" y="247.500" width="14" height="11"/><rect x="1439.500" y="263.500" width="14" height="11"/><rect x="1439.500" y="279.500" width="14" height="11"/><rect x="1439.500" y="295.500" width="14" height="11"/><rect x="1439.500" y="311.500" width="14" height="11"/><rect x="1439.500" y="327.500" width="14" height="11"/><rect x="1439.500" y="343.500" width="14" height="11"/></g>
<g fill="none" stroke="#1a1a9a"><circle cx="1446.500" cy="220.500" r="4"/><path d="M1446.500 218v3h2"/><circle cx="1446.500" cy="300.500" r="4"/><path d="M1446.500 298v3h2"/><circle cx="1446.500" cy="348.500" r="4"/><path d="M1446.500 346v3h2"/></g>
<g fill="#1a1a9a" font-size="8" font-weight="bold" text-anchor="middle"><text x="1446.500" y="240.500">abc</text><text x="1446.500" y="256.500">abc</text><text x="1446.500" y="272.500">abc</text><text x="1446.500" y="288.500">123</text><text x="1446.500" y="320.500">abc</text><text x="1446.500" y="336.500">123</text></g>
<!-- properties toolbar -->
<rect x="1400.500" y="475.500" width="22" height="19" rx="3" fill="#e4e4e4" stroke="#666"/>
<g fill="#fff" stroke="#3359a3"><rect x="1403.500" y="478.500" width="5" height="5"/><rect x="1403.500" y="486.500" width="5" height="5"/></g><path d="M1410 480h10M1410 483h10M1410 488h10M1410 491h8" stroke="#889"/>
<text x="1427" y="484" font-size="9" font-weight="bold" fill="#3359a3">A</text><text x="1427" y="493" font-size="9" font-weight="bold" fill="#b03030">Z</text><path d="M1438.500 477v15M1436 489l2.500 4 2.500-4" fill="none" stroke="#111"/>
<rect x="1448" y="475" width="1" height="21" fill="#999"/>
<rect x="1455.500" y="477.500" width="15" height="14" fill="#e0e0e0" stroke="#bbb"/><path d="M1458 482h10M1458 486h10" stroke="#c4c4c4"/>
<!-- properties glyphs -->
<path d="M1413 505v6h-6zM1413 667v6h-6zM1413 757v6h-6zM1413 793v6h-6zM1413 829v6h-6zM1413 919v6h-6z" fill="#444"/>
<path d="M1408.500 576v7l4-3.500zM1408.500 630v7l4-3.500zM1408.500 846v7l4-3.500z" fill="#fff" stroke="#999"/>
<path d="M1906 510l3-3 3 3zM1906 966l3 3 3-3z" fill="#777"/><path d="M1905 704.500h8M1905 707.500h8M1905 710.500h8" stroke="#888"/>
<!-- group toolbar -->
<rect x="5.500" y="782" width="14" height="14" fill="#eef3fb" stroke="#3359a3"/><path d="M12.500 782v14" stroke="#3359a3"/><rect x="5.500" y="782" width="14" height="3" fill="#7ea2da"/><path d="M22 789h5l-2.500 3z" fill="#111"/>
<rect x="33.500" y="782" width="14" height="14" fill="#eef3fb" stroke="#3359a3"/><rect x="33.500" y="782" width="14" height="3" fill="#7ea2da"/><path d="M36 787h9M36 790h9M36 793h9" stroke="#667"/><path d="M51 789h5l-2.500 3z" fill="#111"/>
<rect x="63.500" y="782" width="15" height="14" fill="#eef3fb" stroke="#4a78c0"/><rect x="63.500" y="782" width="15" height="3" fill="#4a78c0"/><path d="M68 790a3 3 0 0 1 5-2M74 790a3 3 0 0 1-5 2" fill="none" stroke="#3a8a10" stroke-width="1.800"/>
<g fill="#fff" stroke="#556"><rect x="4.500" y="806" width="15" height="12"/><rect x="702.500" y="806" width="15" height="12"/></g><path d="M5 809h14M5 812h14M5 815h14" stroke="#667"/><path d="M705 806v12M708 806v12M711 806v12M714 806v12" stroke="#667"/><path d="M4 806h3v12H4z" fill="#d8a070" opacity=".7"/><path d="M703 806h14v2h-14z" fill="#d8a070" opacity=".7"/>
<!-- group grid -->
<g stroke="#efefef" fill="none">
<path d="M4 866.500h691M4 885.500h691M4 904.500h691M4 923.500h691M4 942.500h691M4 961.500h691M4 980.500h691M4 999.500h691M4 1018.500h691"/>
<path d="M701 866.500h692M701 885.500h692M701 904.500h692M701 923.500h692M701 942.500h692M701 961.500h692M701 980.500h692M701 999.500h692M701 1018.500h692"/>
<path d="M164.500 847v189M244.500 847v189M324.500 847v189M404.500 847v189M564.500 847v189M862.500 847v189M941.500 847v189M1022.500 847v189M1102.500 847v189M1262.500 847v189"/>
</g>
<path d="M163.500 823v23M243.500 823v23M323.500 823v23M403.500 823v23M563.500 823v23M861.500 823v23M941.500 823v23M1021.500 823v23M1101.500 823v23M1261.500 823v23" stroke="#dcdcdc"/>
<g fill="none" stroke="#f05a10" stroke-width="2"><path d="M13 852h-2.500v10H13M29 871h-2.500v10H29M711 852h-2.500v10H711"/></g>
<path d="M15 853h6M15 855.500h6M15 858h6M15 860.500h6M31 872h6M31 874.500h6M31 877h6M31 879.500h6M713 853h6M713 855.500h6M713 858h6M713 860.500h6" stroke="#667"/>
</svg>
</body></html>
